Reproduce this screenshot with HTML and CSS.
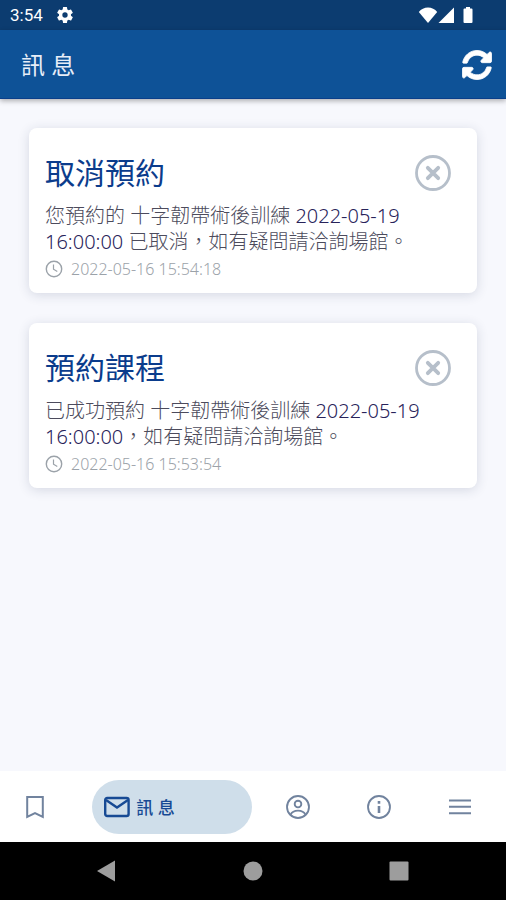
FILE: index.html
```html
<!DOCTYPE html>
<html lang="zh-Hant">
<head>
<meta charset="utf-8">
<meta name="viewport" content="width=device-width, initial-scale=1">
<title>訊息</title>
<link rel="stylesheet" href="styles.css">
</head>
<body>
<div class="status">
  <span>3:54</span>
  <svg viewBox="0 0 24 24" width="20" height="20"><path fill="currentColor" d="M19.14 12.94c.04-.3.06-.61.06-.94s-.02-.64-.07-.94l2.03-1.58a.49.49 0 0 0 .12-.61l-1.92-3.32a.49.49 0 0 0-.59-.22l-2.39.96a7 7 0 0 0-1.62-.94l-.36-2.54A.48.48 0 0 0 13.92 2.400h-3.840a.48.48 0 0 0-.47.41l-.36 2.540c-.59.24-1.130.57-1.620.94l-2.390-.96a.48.48 0 0 0-.59.22L2.740 8.870a.47.47 0 0 0 .12.61l2.030 1.580c-.05.3-.09.63-.09.94s.02.64.07.94l-2.030 1.580a.49.49 0 0 0-.12.61l1.920 3.320c.12.22.37.29.59.22l2.390-.96c.5.38 1.030.7 1.620.94l.36 2.540c.05.24.24.41.48.41h3.840c.24 0 .44-.17.47-.41l.36-2.540c.59-.24 1.130-.56 1.620-.94l2.390.96c.22.08.47 0 .59-.22l1.920-3.320a.47.47 0 0 0-.12-.61zM12 15.200a3.200 3.200 0 1 1 0-6.400 3.200 3.200 0 0 1 0 6.400z"/></svg>
  <svg class="signals" viewBox="0 0 56 18" width="56" height="18" fill="currentColor"><path d="M10 17 .8 6C3 3 6.500 1.400 10 1.400S17 3 19.200 6z"/><path d="M36 1.500V17H20.500z"/><path d="M46.500 2.400H48V1h4v1.400h1.500q1 0 1 1V16q0 1-1 1h-7q-1 0-1-1V3.400q0-1 1-1z"/></svg>
</div>
<header class="appbar">
  <h1>訊 息</h1>
  <button class="icon-btn" aria-label="重新整理"><svg viewBox="0 0 512 512" width="30" height="30"><path fill="currentColor" stroke="currentColor" stroke-width="14" d="M370.720 133.280C339.458 104.008 298.888 87.962 255.848 88c-77.458.068-144.328 53.178-162.791 126.850-1.344 5.363-6.122 9.150-11.651 9.150H24.103c-7.498 0-13.194-6.807-11.807-14.176C33.933 94.924 134.813 8 256 8c66.448 0 126.791 26.136 171.315 68.685L463.030 40.970C478.149 25.851 504 36.559 504 57.941V192c0 13.255-10.745 24-24 24H345.941c-21.382 0-32.090-25.851-16.971-40.971l41.750-41.749zM32 296h134.059c21.382 0 32.090 25.851 16.971 40.971l-41.750 41.750c31.262 29.273 71.835 45.319 114.876 45.280 77.418-.07 144.315-53.144 162.787-126.849 1.344-5.363 6.122-9.150 11.651-9.150h57.304c7.498 0 13.194 6.807 11.807 14.176C478.067 417.076 377.187 504 256 504c-66.448 0-126.791-26.136-171.315-68.685L48.970 471.030C33.851 486.149 8 475.441 8 454.059V320c0-13.255 10.745-24 24-24z"/></svg></button>
</header>
<main class="list">
  <article class="card">
    <div class="card-head"><h2>取消預約</h2>
      <button class="icon-btn close" aria-label="刪除"><svg viewBox="0 0 36 36" width="36" height="36" fill="none" stroke="currentColor"><circle cx="18" cy="18" r="16.500" stroke-width="2.800"/><path d="m12.800 12.800 10.400 10.400m0-10.400-10.400 10.400" stroke-width="3.800" stroke-linecap="round"/></svg></button>
    </div>
    <p>您預約的 十字韌帶術後訓練 <span class="num">2022-05-19</span> <span class="num">16:00:00</span> 已取消，如有疑問請洽詢場館。</p>
    <time datetime="2022-05-16T15:54:18"><svg viewBox="0 0 18 18" width="18" height="18" fill="none" stroke="currentColor"><circle cx="9" cy="9" r="7.700" stroke-width="1.400"/><path d="M8.500 4.500v4.700l3.800 2.300" stroke-width="1.200"/></svg>2022-05-16 15:54:18</time>
  </article>
  <article class="card">
    <div class="card-head"><h2>預約課程</h2>
      <button class="icon-btn close" aria-label="刪除"><svg viewBox="0 0 36 36" width="36" height="36" fill="none" stroke="currentColor"><circle cx="18" cy="18" r="16.500" stroke-width="2.800"/><path d="m12.800 12.800 10.400 10.400m0-10.400-10.400 10.400" stroke-width="3.800" stroke-linecap="round"/></svg></button>
    </div>
    <p>已成功預約 十字韌帶術後訓練 <span class="num">2022-05-19</span> <span class="num">16:00:00</span>，如有疑問請洽詢場館。</p>
    <time datetime="2022-05-16T15:53:54"><svg viewBox="0 0 18 18" width="18" height="18" fill="none" stroke="currentColor"><circle cx="9" cy="9" r="7.700" stroke-width="1.400"/><path d="M8.500 4.500v4.700l3.800 2.300" stroke-width="1.200"/></svg>2022-05-16 15:53:54</time>
  </article>
</main>
<nav class="tabs">
  <a href="#bookmark" aria-label="書籤"><svg viewBox="0 0 24 24" width="24" height="24"><path d="M4.200 2h15.600v20L12 18.200 4.200 22z"/></svg></a>
  <a href="#messages" class="active" aria-current="page"><svg viewBox="0 0 26 22" width="26" height="22"><rect x="1.200" y="2" width="23.400" height="18" rx="2"/><path d="m2 4 11 7.500L24 4"/></svg>訊 息</a>
  <a href="#profile" aria-label="個人"><svg viewBox="0 0 26 26" width="24" height="24"><circle cx="13" cy="13" r="11.900"/><circle cx="13" cy="9.800" r="3.600"/><path d="M4.800 21.500c1.500-3 4.500-4.500 8.200-4.500s6.700 1.500 8.200 4.500"/></svg></a>
  <a href="#info" aria-label="資訊"><svg viewBox="0 0 26 26" width="24" height="24"><circle cx="13" cy="13" r="11.900"/><path d="M13 6.500v3M13 12v7.500" stroke-width="2.800"/></svg></a>
  <a href="#menu" aria-label="選單"><svg viewBox="0 0 24 24" width="24" height="24"><path d="M1 5.500h22M1 11.800h22M1 18.200h22"/></svg></a>
</nav>
<div class="system">
  <button class="icon-btn" aria-label="返回"><svg viewBox="0 0 22 22" width="22" height="22"><path fill="currentColor" d="M2 11 20 .5v21z"/></svg></button>
  <button class="icon-btn" aria-label="主畫面"><svg viewBox="0 0 22 22" width="22" height="22"><circle fill="currentColor" cx="11" cy="11" r="9.500"/></svg></button>
  <button class="icon-btn" aria-label="最近使用"><svg viewBox="0 0 22 22" width="22" height="22"><rect fill="currentColor" x="1.500" y="1.500" width="19" height="19" rx="1"/></svg></button>
</div>
</body>
</html>
```
FILE: styles.css
```css
* { box-sizing: border-box; }
body {
  margin: 0;
  min-height: 100vh;
  display: flex;
  flex-direction: column;
  background: #f7f8fd;
  font-family: "Noto Sans", "Noto Sans CJK TC", sans-serif;
}
h1, h2, p { margin: 0; }
svg { display: block; flex: none; }
.icon-btn { border: 0; padding: 0; background: none; color: inherit; cursor: pointer; }
.status {
  height: 30px;
  display: flex;
  align-items: center;
  gap: 12px;
  padding: 0 32px 0 10px;
  background: #0c3c70;
  color: #fff;
  font: 400 17px/32px Roboto, sans-serif;
}
.signals { margin-left: auto; }
.appbar {
  height: 69px;
  display: flex;
  align-items: center;
  justify-content: space-between;
  padding: 2px 14px 0 21px;
  background: #0e5297;
  color: #fff;
  border-bottom: 1px solid #0a3f8a;
  box-shadow: 0 2px 5px rgba(0, 0, 0, .3);
}
.appbar h1 { font-size: 24px; line-height: 36px; font-weight: 400; color: #e6edf7; }
.list {
  flex: 1;
  display: flex;
  flex-direction: column;
  gap: 30px;
  padding: 29px;
}
.card {
  background: #fff;
  border-radius: 8px;
  padding: 24px 26px 14px 16px;
  box-shadow: 0 2px 12px rgba(40, 50, 90, .16);
}
.card-head { display: flex; align-items: center; justify-content: space-between; height: 42px; }
.card h2 { font-size: 30px; line-height: 42px; font-weight: 400; color: #0b3c8c; }
.close { color: #b6bfca; }
.card p {
  margin: 9px 0 4px;
  font-size: 20px;
  line-height: 26px;
  font-weight: 300;
  color: #4c4b5c;
}
.num { color: #28235a; white-space: nowrap; }
.card time {
  display: flex;
  align-items: center;
  gap: 8px;
  font-size: 16px;
  line-height: 20px;
  font-weight: 300;
  color: #9ba2a9;
}
.tabs {
  height: 71px;
  display: flex;
  align-items: center;
  justify-content: space-between;
  padding: 0 34px 0 23px;
  background: #fff;
}
.tabs a { color: #71839e; text-decoration: none; }
.tabs svg { fill: none; stroke: currentColor; stroke-width: 2; }
.tabs .active {
  display: flex;
  align-items: center;
  gap: 6px;
  width: 160px;
  height: 54px;
  margin: 0 -24px 0 -12px;
  padding-left: 12px;
  border-radius: 27px;
  background: #cfdeea;
  color: #174a94;
  font-size: 17px;
  font-weight: 500;
}
.tabs .active svg { stroke-width: 2.4; }
.system {
  height: 58px;
  display: flex;
  align-items: center;
  justify-content: space-between;
  padding: 0 96px 0 95px;
  background: #000;
  color: #9d9d9d;
}
```
